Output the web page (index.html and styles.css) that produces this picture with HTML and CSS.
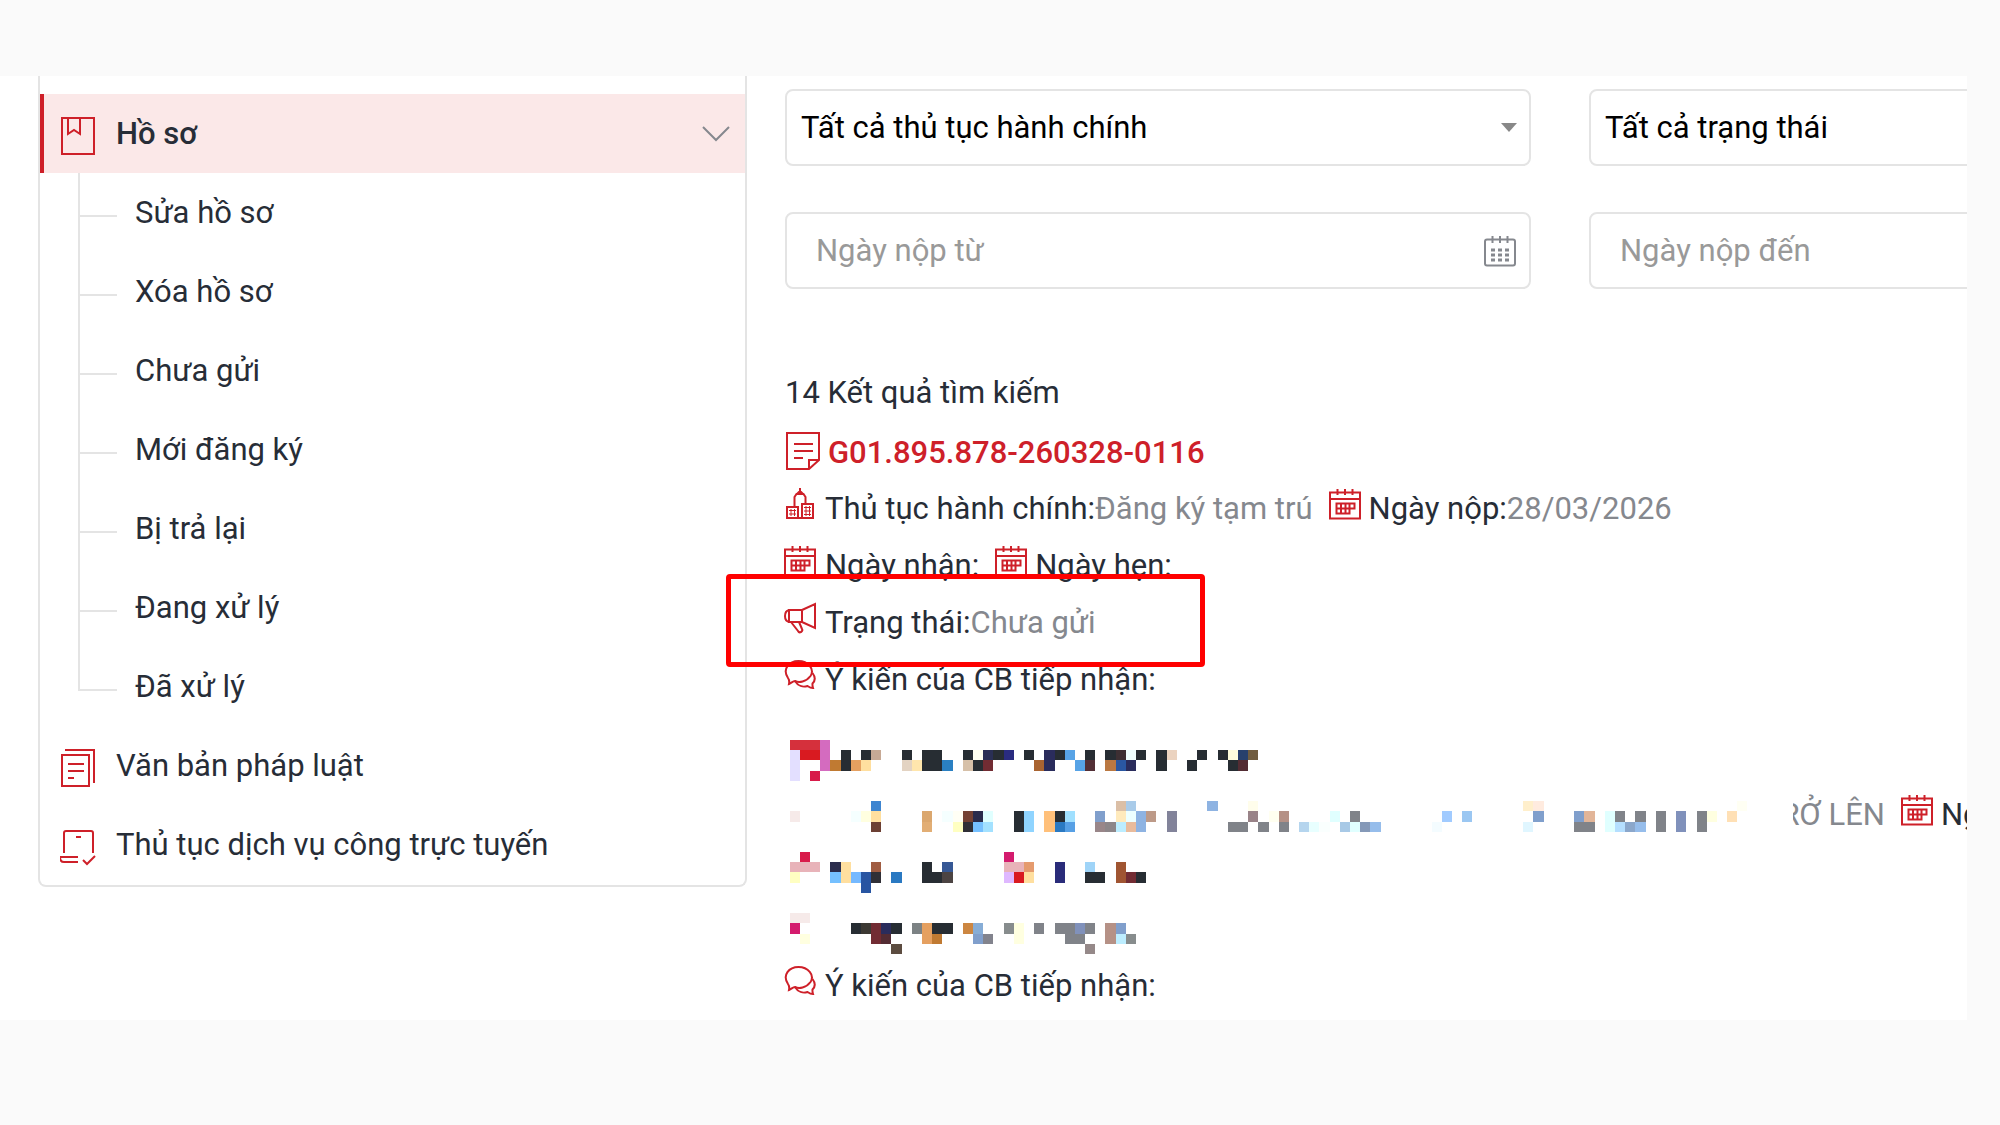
FILE: index.html
```html
<!DOCTYPE html>
<html lang="vi">
<head>
    <meta charset="UTF-8">
    <meta name="viewport" content="width=device-width, initial-scale=1.0">
    <title>Hồ sơ</title>
    <link rel="stylesheet" href="styles.css">
</head>
<body>
    <!-- Biểu tượng dùng chung -->
    <svg class="sprite" width="0" height="0" aria-hidden="true">
        <symbol id="i-calendar" viewBox="0 0 32 32">
            <path d="M1 4.5h30v26H1zM1 11h30M8.500 1v6M16 1v6M23.500 1v6M7.500 15.500h18v5h-5v5h-13zM7.500 20.500h13M12 15.500v10M16.500 15.500v10M20.500 15.500v5"/>
        </symbol>
        <symbol id="i-comment" viewBox="0 0 32 32">
            <path d="M5 25C5.500 22.500 5.500 21 4 19C-2 10 5 2 14.500 2C24 2 31 10 26.500 17C22 23 15 24 11 22C9 22 7.500 24 5 25z"/>
            <path d="M28.500 14C31.500 18 31 22 28.500 24.500C28.300 26.500 28.500 27.500 29 29C27 29 25 28 23.500 27C19 28.500 14 27 11 22"/>
        </symbol>
    </svg>

    <div class="page">
        <!-- Menu bên trái -->
        <nav class="sidebar">
            <a href="#" class="menu-item active">
                <svg class="menu-icon" viewBox="0 0 36 40"><path d="M2 2h32v36H2zM8 2v16l6-4 6 4V2"/></svg>
                <span class="menu-text">Hồ sơ</span>
                <svg class="chevron" viewBox="0 0 28 16"><path d="M1 1l13 13L27 1"/></svg>
            </a>
            <ul class="submenu">
                <li><a href="#">Sửa hồ sơ</a></li>
                <li><a href="#">Xóa hồ sơ</a></li>
                <li><a href="#">Chưa gửi</a></li>
                <li><a href="#">Mới đăng ký</a></li>
                <li><a href="#">Bị trả lại</a></li>
                <li><a href="#">Đang xử lý</a></li>
                <li><a href="#">Đã xử lý</a></li>
            </ul>
            <a href="#" class="menu-item">
                <svg class="menu-icon" viewBox="0 0 36 40"><path d="M2 7h27v31H2zM5 2h29v33M8 16h16M8 23h16M8 30h6"/></svg>
                <span class="menu-text">Văn bản pháp luật</span>
            </a>
            <a href="#" class="menu-item">
                <svg class="menu-icon" viewBox="0 0 36 40"><path d="M4 26V6q0-2 2-2h25q2 0 2 2v20M16 10h5M18 30H0q0 5 4 5h14M23 33l4 4 8-8"/></svg>
                <span class="menu-text">Thủ tục dịch vụ công trực tuyến</span>
            </a>
        </nav>

        <main class="content">
            <!-- Bộ lọc -->
            <form class="filters">
                <div class="filter-row">
                    <div class="field">
                        <select aria-label="Thủ tục hành chính">
                            <option>Tất cả thủ tục hành chính</option>
                        </select>
                    </div>
                    <div class="field">
                        <select aria-label="Trạng thái">
                            <option>Tất cả trạng thái</option>
                        </select>
                    </div>
                </div>
                <div class="filter-row">
                    <div class="field date">
                        <input type="text" placeholder="Ngày nộp từ" aria-label="Ngày nộp từ">
                        <svg class="date-icon" viewBox="0 0 32 32"><path d="M3 4.500h26q2 0 2 2v22q0 2-2 2H3q-2 0-2-2v-22q0-2 2-2zM8.500 1v7M16 1v7M23.500 1v7"/><path class="dots" d="M7 15h18M7 20h18M7 25h18"/></svg>
                    </div>
                    <div class="field date">
                        <input type="text" placeholder="Ngày nộp đến" aria-label="Ngày nộp đến">
                    </div>
                </div>
            </form>

            <!-- Kết quả -->
            <p class="count">14 Kết quả tìm kiếm</p>
            <div class="code">
                <svg class="code-icon" viewBox="0 0 36 40"><path d="M2 2h32v27l-10 9H2zM24 38v-9h10M9 13h19M9 20h19M9 27h9"/></svg>
                <a href="#">G01.895.878-260328-0116</a>
            </div>
            <div class="line">
                <svg class="icon" viewBox="0 0 32 32"><path d="M3 19h11v11H3zM18 16h11v14H18zM14 30h4M10.500 19V9l2-3h7l2 3v7M13 6l3-3 3 3M16 0v3"/><path class="thin" d="M5 22.500h7M5 26h7M7 21v7M10.500 21v7M20 19.500h7M20 23h7M20 26.500h7M22 18v10M25.500 18v10"/></svg>
                <span>Thủ tục hành chính:<span class="value">Đăng ký tạm trú</span></span>
                <svg class="icon next"><use href="#i-calendar"/></svg>
                <span>Ngày nộp:<span class="value">28/03/2026</span></span>
            </div>
            <div class="line">
                <svg class="icon"><use href="#i-calendar"/></svg>
                <span>Ngày nhận:</span>
                <svg class="icon next"><use href="#i-calendar"/></svg>
                <span>Ngày hẹn:</span>
            </div>
            <div class="line highlight">
                <svg class="icon" viewBox="0 0 32 32"><path d="M18 8L31 2v24L18 20zM18 8H5v12h13M5 8Q1 9 1 14t4 6M7 20l7 9q1 2 3 1t1-3l-3-7"/></svg>
                <span>Trạng thái:<span class="value">Chưa gửi</span></span>
            </div>
            <div class="line">
                <svg class="icon"><use href="#i-comment"/></svg>
                <span>Ý kiến của CB tiếp nhận:</span>
            </div>

            <!-- Hồ sơ đã che thông tin -->
            <div class="masked">
                <svg id="mosaic" class="mosaic" viewBox="0 0 94 21" shape-rendering="crispEdges" aria-hidden="true"></svg>
                <div class="masked-line">
                    <span class="value cut">RỞ LÊN</span>
                    <svg class="icon next"><use href="#i-calendar"/></svg>
                    <span>Ngày nộp:</span>
                </div>
            </div>
            <div class="line">
                <svg class="icon"><use href="#i-comment"/></svg>
                <span>Ý kiến của CB tiếp nhận:</span>
            </div>
        </main>
    </div>

    <script src="mosaic.js"></script>
</body>
</html>
```

FILE: mosaic.js
```js
// hàng: "cột màu" hoặc "cột-cột màu"
const D = '272d33', G = '808389';
const rows = {
    0: `0-2 d5303c,3 d46bbf`,
    1: `0 e3dfff,1-2 d91a20,3 d46bbf,5 ${D},7 ${D},8 c7a995,11 ${D},13-14 ${D},17 ${D},18 fffff0,19 2a2f55,20 ${D},21 2a2c80,23 ${D},25 2a2c5c,26 ${D},27 57a3e6,29 ${D},31 ${D},32 3d2f33,33 f0ffff,34 ${D},36 ${D},37 ebd3c0,40 ${D},42 ${D},43 fffddd,44 28406c,45 705c40`,
    2: `0 e3dfff,3 d46bbf,4 c07a32,5 ${D},6 e5a060,7 ffdf9f,11 e3d3c2,12 ffe6ad,13-14 ${D},15 2a80c2,17 d6c0a8,18 ${D},19 722c33,24 a96431,25 2a2c5c,28 57a3e6,29 532f36,31 ba7842,32 2a57a2,33 2a2c5c,36 ${D},39 ${D},43 ${D},44 532c33`,
    3: `0 e3dfff,2 d81b4a`,
    6: `8 3e85d0,32 dbbfa6,33 a9cbe9,41 8eb3e2,45 fffdeb,72 ffefcc,73 ffebdf,93 fffff3`,
    7: `0 f6eae9,6 f5ffff,7 ffffe0,8 ffdf9f,13 dba76e,15 f5ffff,16 fffff5,17 744133,18 2a2c4c,19 e0ffff,22 ${D},23 8fd4ff,25 ffc07a,26 ${D},27 a0e0ff,30 809fcc,32 ffeabc,33 edffff,34 8eb3e2,35 bd9a88,37 82839a,45 998388,47 fffff0,48 b59186,53 e0ffff,55 ${G},64 a1cbff,66 9bc7f2,73 809fcc,77 809fcc,78 e2b598,80 e0ffff,81 ${G},83 ${G},85 ${G},87 8091bb,89 ${G},90 ffffe0,92 ffe0b5`,
    8: `8 6c3f33,13 e2ae75,16 ffffc2,17 302f36,18 75c0ff,19 a3e1ff,22 ${D},23 8fd4ff,25 ffc07a,26 2a79c2,27 57a0e5,30 998689,31 8d8689,32 bcedff,33 e9bb9c,34 8eb3e2,37 82839a,43-44 ${G},46 ${G},48 ${G},50 b5d5ee,51 e8ffff,52 fafffe,54 a8c9e6,55 e0ffff,56 8599b8,57 96bdeb,63 f4fcff,72 e0f6ff,77-78 ${G},80 e0ffff,81 b5dfff,82 8ba7cb,83 96bdeb,85 ${G},87 8091bb,89 ${G}`,
    11: `1 d81b4a,21 d41b6e`,
    12: `0-2 e8b3b9,4 2a2c4c,5 ffdf9f,8 a05c42,13 ${D},15 365895,21-22 e8b3b9,23 e59b6e,26 2a2c7a,29 9fd4f8,32 a05532`,
    13: `0 ffffc2,4 75c0ff,5 ffdf9f,6 75b9ff,7 2855a2,8 302f36,10 2a79c2,13-14 ${D},15 4c4443,21 dfb8ff,22 d91a20,23 ffdf9f,26 2a2c7a,29-30 ${D},32 a05532,33 722c33,34 ${D}`,
    14: `7 2855a2`,
    17: `0-1 f6eae9`,
    18: `0 d41b6e,6 ${D},7 3c3933,8 722c33,9 2a2c5c,10 ${D},12 7c8284,13 e5a060,14-15 ${D},17 cc8641,18 87add6,21 878c8d,22 ffffe0,24 ${G},26-27 ${G},28 8091bb,29 ${G},31 b59186,32 809fcc`,
    19: `1 ffffe0,8 722c33,9 532c33,13 e5a060,14 c07a32,18 809fcc,19 82838d,22 ffffe0,27-28 ${G},31 b59186,32 bcedff,33 878c8d`,
    20: `10 5c4c40,29 958989`
};

let out = '';
for (const y in rows) {
    rows[y].split(',').forEach(cell => {
        const [cols, color] = cell.split(' ');
        const [from, to = from] = cols.split('-').map(Number);
        out += `<rect x="${from}" y="${y}" width="${to - from + 1}" height="1" fill="#${color}"/>`;
    });
}
document.getElementById('mosaic').innerHTML = out;
```

FILE: styles.css
```css
*,
*::before,
*::after {
    box-sizing: border-box;
}

body {
    margin: 0;
    padding: 76px 33px 0 0;
    background: #fafafa;
    color: #272d37;
    font-family: Roboto, "Liberation Sans", sans-serif;
    font-size: 31px;
}

a {
    color: inherit;
    text-decoration: none;
}

svg {
    flex: none;
    fill: none;
    stroke: #ce2029;
    stroke-width: 2;
}

.sprite {
    position: absolute;
}

.page {
    display: flex;
    align-items: flex-start;
    padding: 0 0 6px 38px;
    background: #fff;
    overflow: hidden;
}

/* menu */
.sidebar {
    flex: 0 0 709px;
    padding: 18px 0 1px;
    border: 2px solid #e4e4e4;
    border-top: 0;
    border-radius: 0 0 8px 8px;
}

.menu-item {
    display: flex;
    align-items: center;
    height: 79px;
    padding: 0 15px 0 20px;
}

.menu-item.active {
    padding-left: 16px;
    border-left: 4px solid #ce1f28;
    background: #fbe8e8;
    font-weight: 500;
}

.menu-icon {
    width: 36px;
    height: 40px;
    margin-top: 5px;
}

.menu-text {
    flex: 1;
    margin-left: 20px;
}

.chevron {
    width: 28px;
    height: 16px;
    stroke: #85888e;
}

.submenu {
    margin: 0;
    padding: 0 0 0 38px;
    list-style: none;
}

.submenu li {
    display: flex;
    height: 79px;
    border-left: 2px solid #e4e4e4;
    line-height: 79px;
}

.submenu li::before {
    content: "";
    width: 37px;
    height: 44px;
    margin-right: 18px;
    border-bottom: 2px solid #e4e4e4;
}

.submenu li:last-child {
    border-left: 0;
}

.submenu li:last-child::before {
    width: 39px;
    border-left: 2px solid #e4e4e4;
}

/* nội dung */
.content {
    flex: 1;
    min-width: 0;
    padding: 13px 0 0 38px;
}

.filter-row {
    display: flex;
    gap: 58px;
    margin-bottom: 46px;
}

.field {
    display: flex;
    align-items: center;
    flex: 0 0 746px;
    height: 77px;
    border: 2px solid #e4e4e4;
    border-radius: 8px;
}

.field select,
.field input {
    flex: 1;
    min-width: 0;
    height: 100%;
    padding: 0 14px;
    border: 0;
    outline: 0;
    background: none;
    color: #000;
    font: inherit;
    appearance: none;
}

.field input {
    padding: 0 29px;
}

.field input::placeholder {
    color: #999;
    opacity: 1;
}

.field:not(.date)::after {
    content: "";
    margin-right: 12px;
    border: 8px solid transparent;
    border-top: 9px solid #888;
    border-bottom: 0;
}

.date-icon {
    width: 32px;
    height: 32px;
    margin-right: 13px;
    stroke: #85888e;
}

.dots {
    stroke-width: 3;
    stroke-dasharray: 4 3;
}

.count {
    margin: 72px 0 0;
    line-height: 64px;
}

.code {
    display: flex;
    align-items: center;
    height: 55px;
    color: #ce2029;
    font-weight: 500;
}

.code-icon {
    width: 36px;
    height: 40px;
    margin: 0 7px 4px 0;
}

.line {
    display: flex;
    align-items: center;
    height: 57px;
    white-space: nowrap;
}

.icon {
    width: 32px;
    height: 32px;
    margin: 0 9px 10px -1px;
}

.icon.next {
    margin: 0 8px 10px 16px;
}

.thin {
    stroke-width: 1;
}

.value {
    color: #85888e;
}

.highlight {
    position: relative;
}

.highlight::after {
    content: "";
    position: absolute;
    top: -20px;
    left: -59px;
    width: 479px;
    height: 93px;
    border: 5px solid #f00;
    border-radius: 4px;
}

.masked {
    display: flex;
    height: 214px;
    margin: 32px 0 3px 4px;
}

.mosaic {
    width: 959px;
    height: 214px;
    stroke: none;
}

.masked-line {
    display: flex;
    align-items: center;
    height: 57px;
    margin: 46px 0 0 45px;
    white-space: nowrap;
}

/* chữ đầu bị che một phần */
.cut {
    display: flex;
    justify-content: flex-end;
    width: 92px;
    line-height: 57px;
    overflow: hidden;
}
```
